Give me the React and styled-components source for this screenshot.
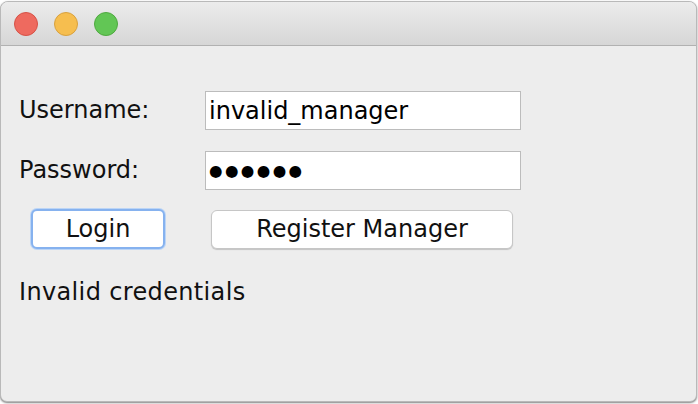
import React from "react";
import styled, { createGlobalStyle } from "styled-components";

const GlobalStyle = createGlobalStyle`
  html, body {
    margin: 0;
    padding: 0;
    background: #ffffff;
    overflow: hidden;
  }
  body {
    font-family: "DejaVu Sans", "Liberation Sans", sans-serif;
  }
`;

const Desk = styled.div`
  width: 698px;
  height: 404px;
  padding-top: 1px;
  box-sizing: border-box;
  overflow: hidden;
`;

const Window = styled.div`
  width: 697px;
  height: 401px;
  box-sizing: border-box;
  border: 1px solid #b9b9b9;
  border-radius: 8px 8px 7px 7px;
  background: #ededed;
  overflow: hidden;
  display: flex;
  flex-direction: column;
  box-shadow: 0 1px 2px rgba(0, 0, 0, 0.5);
`;

const TitleBar = styled.div`
  height: 43px;
  flex: none;
  display: flex;
  align-items: center;
  gap: 16px;
  padding-left: 13px;
  background: linear-gradient(#ececec, #d6d6d6);
  border-bottom: 1px solid #b1b1b1;
`;

const Light = styled.span`
  width: 22px;
  height: 22px;
  border-radius: 50%;
  background: ${(p) => p.$fill};
  border: 1px solid ${(p) => p.$edge};
`;

const Content = styled.div`
  padding: 45px 0 0 18px;
  display: flex;
  flex-direction: column;
`;

const FieldRow = styled.div`
  display: flex;
  align-items: center;
  margin-bottom: ${(p) => p.$gap}px;
`;

const Label = styled.label`
  width: 186px;
  font-size: 24px;
  line-height: 39px;
  color: #111;
`;

const TextField = styled.input`
  width: 316px;
  height: 39px;
  box-sizing: border-box;
  border: 1px solid #bcbcbc;
  background: #fff;
  margin: 0;
  padding: 0 0 0 3px;
  font-family: "DejaVu Sans", sans-serif;
  font-size: ${(p) => (p.$masked ? "15.5px" : "24px")};
  letter-spacing: ${(p) => (p.$masked ? "2.4px" : "0")};
  color: #000;
  outline: none;
`;

const ButtonRow = styled.div`
  display: flex;
  align-items: center;
  gap: 46px;
  padding-left: 12px;
`;

const Button = styled.button`
  width: ${(p) => p.$w}px;
  height: ${(p) => (p.$focus ? 40 : 39)}px;
  box-sizing: border-box;
  margin: 0;
  padding: 0;
  background: #fff;
  border: ${(p) => (p.$focus ? "2px solid #86b2ef" : "1px solid #c6c6c6")};
  border-radius: 6px;
  box-shadow: ${(p) =>
    p.$focus ? "0 0 0 1px #bcd5f6" : "0 1px 1px rgba(0,0,0,0.18)"};
  font-family: "DejaVu Sans", sans-serif;
  font-size: 24px;
  color: #111;
`;

const Message = styled.div`
  margin-top: 29px;
  font-size: 24px;
  line-height: 28px;
  letter-spacing: 0.35px;
  color: #111;
`;

export default function App() {
  return (
    <Desk>
      <GlobalStyle />
      <Window>
        <TitleBar>
          <Light $fill="#ee6a5f" $edge="#d65247" />
          <Light $fill="#f6be4f" $edge="#d8a13f" />
          <Light $fill="#62c655" $edge="#4fa940" />
        </TitleBar>
        <Content>
          <FieldRow $gap={21}>
            <Label>Username:</Label>
            <TextField readOnly value="invalid_manager" />
          </FieldRow>
          <FieldRow $gap={19}>
            <Label>Password:</Label>
            <TextField readOnly $masked value="●●●●●●" />
          </FieldRow>
          <ButtonRow>
            <Button $w={134} $focus>Login</Button>
            <Button $w={302}>Register Manager</Button>
          </ButtonRow>
          <Message>Invalid credentials</Message>
        </Content>
      </Window>
    </Desk>
  );
}
